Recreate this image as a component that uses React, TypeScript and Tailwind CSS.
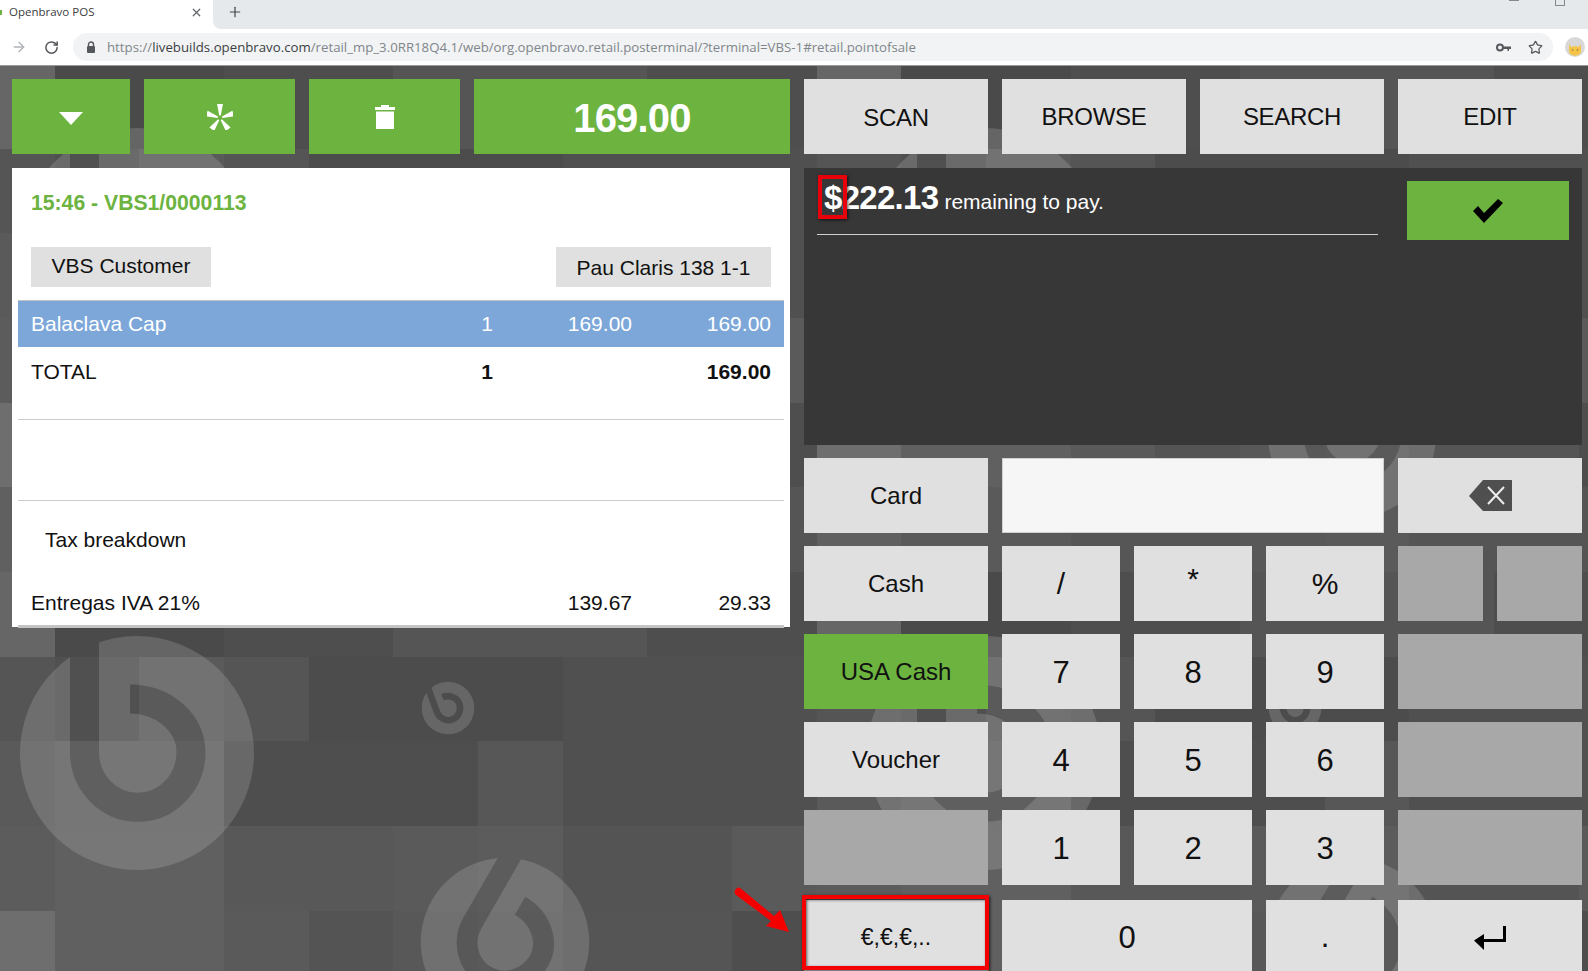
import { ArrowRight, Plus, RotateCw, Star, X } from 'lucide-react';

const TILE = 84.67;
const TILES = [
  ['#666666', '#4a4a4a', '#4a4a4a', '#4e4e4e', '#4e4e4e', '#555555', '#555555', '#555555', '#4e4e4e', '#4e4e4e'],
  ['#555555', '#505050', '#5a5a5a', '#555555', '#4c4c4c', '#4c4c4c', '#4c4c4c', '#505050', '#505050', '#505050'],
  ['#5a5a5a', '#5f5f5f', '#5f5f5f', '#4e4e4e', '#4e4e4e', '#4e4e4e', '#575757', '#505050', '#505050', '#505050'],
  ['#5c5c5c', '#606060', '#606060', '#585858', '#585858', '#5a5a5a', '#5c5c5c', '#545454', '#545454', '#5a5a5a'],
  ['#6e6e6e', '#606060', '#606060', '#5a5a5a', '#545454', '#585858', '#5a5a5a', '#555555', '#555555', '#4e4e4e'],
  ['#606060', '#5a5a5a', '#5a5a5a', '#565656', '#565656', '#585858', '#5a5a5a', '#555555', '#555555', '#555555'],
];

const LOGOS = [
  { x: 137, y: 245, s: 1, r: 0 },
  { x: 984, y: 245, s: 1, r: 0 },
  { x: 137, y: 753, s: 1, r: 0 },
  { x: 984, y: 753, s: 1, r: 0 },
  { x: 448, y: 708, s: 0.225, r: -20 },
  { x: 1295, y: 708, s: 0.225, r: -20 },
  { x: 505, y: 942, s: 0.72, r: 30 },
  { x: 1352, y: 942, s: 0.72, r: 30 },
  { x: 1352, y: 434, s: 0.72, r: 30 },
];

function Background() {
  const cells = [];
  for (let row = 0; row < 11; row++) {
    for (let col = 0; col < 20; col++) {
      cells.push(
        <rect
          key={row + '-' + col}
          x={-30 + col * TILE}
          y={64 + row * TILE}
          width={TILE + 1}
          height={TILE + 1}
          fill={TILES[row % 6][col % 10]}
          shapeRendering="crispEdges"
        />
      );
    }
  }
  return (
    <svg className="absolute left-0 top-0" width="1588" height="971" viewBox="0 0 1588 971">
      <defs>
        <mask id="logoCut" maskUnits="userSpaceOnUse" x="-130" y="-130" width="260" height="260">
          <rect x="-130" y="-130" width="260" height="260" fill="white" />
          <path d="M-52.5 -130V-1A53 55 0 0 0 54 -1A61 53 0 0 0 -7 -54" fill="none" stroke="black" strokeWidth="29" />
        </mask>
      </defs>
      {cells}
      {LOGOS.map((l, i) => (
        <g key={i} transform={`translate(${l.x} ${l.y}) rotate(${l.r}) scale(${l.s})`}>
          <g mask="url(#logoCut)">
            <circle r="117" fill="white" fillOpacity="0.15" />
          </g>
        </g>
      ))}
    </svg>
  );
}

function BrowserChrome() {
  return (
    <div className="relative bg-white h-[66px] border-b border-[#9a9a9a] font-['Open_Sans',sans-serif]">
      <div className="flex h-[29px]">
        <div className="w-[213px] flex items-center pl-[9px] pr-[10px] text-[11.5px] text-[#3c4043] relative">
          <span className="absolute left-0 top-[10px] w-[2px] h-[5px] bg-[#6db33f]" />
          <span className="flex-1 pb-[5px]">Openbravo POS</span>
          <X className="w-[13px] h-[13px] mb-[5px] text-[#5f6368]" strokeWidth={2.2} />
        </div>
        <div className="flex-1 flex bg-[#e6e9ec] rounded-bl-[8px]">
          <Plus className="ml-[14px] mt-[4px] w-[16px] h-[16px] text-[#444]" strokeWidth={1.8} />
          <div className="flex-1" />
          <div className="w-[10px] h-[1px] bg-[#888] mr-[36px]" />
          <div className="w-[10px] h-[6px] border border-t-0 border-[#888] mr-[23px]" />
        </div>
      </div>
      <div className="flex items-center h-[28px] mt-[4px]">
        <ArrowRight className="ml-[11px] w-[16px] h-[16px] text-[#b0b3b7]" strokeWidth={2} />
        <RotateCw className="ml-[17px] w-[15px] h-[15px] text-[#55585c]" strokeWidth={2.4} />
        <div className="ml-[14px] w-[1480px] h-[28px] rounded-full bg-[#f1f3f4] flex items-center text-[13.24px]">
          <svg className="ml-[13px]" width="10" height="13" viewBox="0 0 10 13">
            <path d="M2.5 5V3.5a2.5 2.5 0 0 1 5 0V5" fill="none" stroke="#55585c" strokeWidth="1.4" />
            <rect x="1" y="5" width="8" height="7" rx="1" fill="#55585c" />
          </svg>
          <span className="ml-[11px] whitespace-nowrap text-[#80868b] pt-[1px]">
            https://<span className="text-[#3c4043]">livebuilds.openbravo.com</span>/retail_mp_3.0RR18Q4.1/web/org.openbravo.retail.posterminal/?terminal=VBS-1#retail.pointofsale
          </span>
          <div className="flex-1" />
          <svg width="15" height="9" viewBox="0 0 15 9" className="mr-[17px]">
            <circle cx="4" cy="4.5" r="3" fill="none" stroke="#55585c" strokeWidth="2" />
            <path d="M7 3.5H15V6H13V8H11.5V6H7z" fill="#55585c" />
          </svg>
          <Star className="mr-[10px] w-[15px] h-[15px] text-[#55585c]" strokeWidth={2} />
        </div>
        <svg className="ml-[12px]" width="20" height="20" viewBox="0 0 20 20">
          <circle cx="10" cy="10" r="10" fill="#d8d8d8" />
          <path d="M4 7L6 10C7 9 13 9 14 10L16 7V15C14 20 6 20 4 15Z" fill="#f5c54a" />
          <circle cx="7.5" cy="13" r="0.8" fill="#8a6a20" />
          <circle cx="12.5" cy="13" r="0.8" fill="#8a6a20" />
        </svg>
      </div>
    </div>
  );
}

function TopIconButton({ className, children }: { className: string; children: React.ReactNode }) {
  return <div className={`h-[75px] bg-[#6cb33f] flex items-center justify-center ${className}`}>{children}</div>;
}

function ReceiptRow({ name, qty, price, total, className }: { name: string; qty?: string; price?: string; total?: string; className?: string }) {
  return (
    <div className={`grid grid-cols-[436px_40px_125px_139px] px-[13px] items-center ${className ?? ''}`}>
      <span>{name}</span>
      <span className="text-center">{qty}</span>
      <span className="text-right">{price}</span>
      <span className="text-right">{total}</span>
    </div>
  );
}

function LeftColumn() {
  return (
    <div className="w-[778px]">
      <div className="flex gap-[14px]">
        <TopIconButton className="w-[118px] pt-[3px]">
          <svg width="24" height="13" viewBox="0 0 24 13">
            <path d="M0 0H24L12 13Z" fill="white" />
          </svg>
        </TopIconButton>
        <TopIconButton className="w-[151px]">
          <svg width="26" height="26" viewBox="-14 -15 28 28" fill="white">
            <path d="M-0.8 -2.500H0.8L3.2 -15H-3.2Z" />
            <path d="M-0.8 -2.500H0.8L3.2 -15H-3.2Z" transform="rotate(72)" />
            <path d="M-0.8 -2.500H0.8L3.2 -15H-3.2Z" transform="rotate(144)" />
            <path d="M-0.8 -2.500H0.8L3.2 -15H-3.2Z" transform="rotate(216)" />
            <path d="M-0.8 -2.500H0.8L3.2 -15H-3.2Z" transform="rotate(288)" />
          </svg>
        </TopIconButton>
        <TopIconButton className="w-[151px]">
          <svg width="20" height="24" viewBox="0 0 20 24" fill="white">
            <path d="M0 2H6V0H14V2H20V5H0Z" />
            <path d="M1 6.5H19V24H1Z" />
          </svg>
        </TopIconButton>
        <TopIconButton className="flex-1 text-white font-bold text-[40px] tracking-[-0.8px] pt-[2px]">169.00</TopIconButton>
      </div>
      <div className="mt-[14px] h-[459px] bg-white px-[6px] text-[21px] text-[#111]">
        <div className="pt-[21px] pl-[13px] text-[21.2px] leading-[28px] font-bold text-[#6cb33f]">15:46 - VBS1/0000113</div>
        <div className="flex justify-between pl-[13px] pr-[13px] mt-[30px]">
          <div className="w-[180px] h-[40px] bg-[#e0e0e0] flex items-center justify-center pb-[3px]">VBS Customer</div>
          <div className="w-[215px] h-[40px] bg-[#e0e0e0] flex items-center justify-center pt-[1px]">Pau Claris 138 1-1</div>
        </div>
        <ReceiptRow
          name="Balaclava Cap"
          qty="1"
          price="169.00"
          total="169.00"
          className="mt-[13px] h-[47px] bg-[#7da7d9] border-t border-[#c4c4c4] text-white"
        />
        <div className="h-[73px] border-b border-[#cccccc]">
          <ReceiptRow name="TOTAL" qty="1" total="169.00" className="h-[49px] [&>*:nth-child(n+2)]:font-bold" />
        </div>
        <div className="h-[81px] border-b border-[#cccccc]" />
        <div className="pl-[27px] pt-[25px] leading-[28px]">Tax breakdown</div>
        <ReceiptRow name="Entregas IVA 21%" price="139.67" total="29.33" className="mt-[33px] h-[28px]" />
        <div className="h-[3px] mt-[10px] bg-[#c4c4c4]" />
      </div>
    </div>
  );
}

function Key({ children, className, tone = 'bg-[#e0e0e0]' }: { children?: React.ReactNode; className?: string; tone?: string }) {
  return <div className={`h-[75px] flex items-center justify-center text-[#111] ${tone} ${className ?? ''}`}>{children}</div>;
}

function Digit({ children, className }: { children: string; className?: string }) {
  return (
    <Key className={`text-[31px] pt-[4px] ${className ?? ''}`}>{children}</Key>
  );
}

function RightColumn() {
  const disabled = 'bg-[#a8a8a8]';
  return (
    <div className="w-[778px] relative">
      <div className="grid grid-cols-4 gap-[14px] text-[24px] tracking-[-0.3px]">
        <Key><span className="pt-[2px]">SCAN</span></Key>
        <Key>BROWSE</Key>
        <Key>SEARCH</Key>
        <Key>EDIT</Key>
      </div>

      <div className="mt-[14px] h-[277px] bg-[#373737] flex justify-between text-white">
        <div className="ml-[13px] w-[561px] h-[67px] border-b border-[#cfcfcf] pl-[7px] pt-[10px] whitespace-nowrap">
          <span className="font-bold text-[33px] leading-[40px] tracking-[-0.7px]">$222.13</span>
          <span className="ml-[6px] text-[21px]">remaining to pay.</span>
        </div>
        <div className="mt-[13px] mr-[13px] w-[162px] h-[59px] bg-[#6cb33f] flex items-center justify-center">
          <svg width="30" height="24" viewBox="0 0 30 24">
            <path d="M0 12L5 7L11 14L25 0L30 4L11 24Z" fill="black" />
          </svg>
        </div>
      </div>

      <div className="mt-[13px] grid grid-cols-[184px_118px_118px_118px_85px_85px] gap-x-[14px] gap-y-[13px] text-[24px]">
        <Key>Card</Key>
        <div className="col-span-3 h-[75px] bg-[#f6f6f6] border border-[#d0d0d0]" />
        <Key className="col-span-2">
          <svg width="43" height="31" viewBox="0 0 43 31">
            <path d="M14 0H43V31H14L0 16Z" fill="#4f4f4f" />
            <path d="M19 7L35 24M35 7L19 24" stroke="#eeeeee" strokeWidth="2" fill="none" />
          </svg>
        </Key>

        <Key>Cash</Key>
        <Key className="text-[30px]">/</Key>
        <Key className="text-[30px]"><span className="pb-[10px]">*</span></Key>
        <Key className="text-[30px]">%</Key>
        <Key tone={disabled} />
        <Key tone={disabled} />

        <Key tone="bg-[#6cb33f]">USA Cash</Key>
        <Digit>7</Digit>
        <Digit>8</Digit>
        <Digit>9</Digit>
        <Key tone={disabled} className="col-span-2" />

        <Key>Voucher</Key>
        <Digit>4</Digit>
        <Digit>5</Digit>
        <Digit>6</Digit>
        <Key tone={disabled} className="col-span-2" />

        <Key tone={disabled} />
        <Digit>1</Digit>
        <Digit>2</Digit>
        <Digit>3</Digit>
        <Key tone={disabled} className="col-span-2" />

        <Key className="mt-[2px] text-[23px]"><span className="pb-[1px]">€,€,€,..</span></Key>
        <Key className="mt-[2px] col-span-2 text-[31px] pt-[2px]">0</Key>
        <Key className="mt-[2px] text-[31px]">.</Key>
        <Key className="mt-[2px] col-span-2">
          <svg width="32" height="24" viewBox="0 0 32 24">
            <path d="M29 0H32V16H10V24L0 14.5L10 8V13H29Z" fill="black" />
          </svg>
        </Key>
      </div>

      {/* annotations drawn on the screenshot */}
      <div className="absolute left-[14px] top-[96px] w-[29px] h-[44px] border-[4px] border-[#e8000b] shadow-[1px_1px_3px_rgba(0,0,0,0.7)]" />
      <div className="absolute left-[-2px] top-[816px] w-[187px] h-[75px] border-[4px] border-[#f40000] shadow-[1px_1px_3px_rgba(0,0,0,0.7),inset_1px_1px_3px_rgba(0,0,0,0.6)]" />
      <svg className="absolute left-[-71px] top-[808px]" width="60" height="50" viewBox="0 0 60 50">
        <path d="M4 1C6 0 7 1 9 2.500L41 29L47 23L56 45L33 39L38 34L3 8C1 6 1 3 4 1Z" fill="#f40000" />
      </svg>
    </div>
  );
}

export default function App() {
  return (
    <div className="relative w-[1588px] h-[971px] overflow-hidden font-['Liberation_Sans',Arial,sans-serif]">
      <BrowserChrome />
      <div className="relative h-[905px] overflow-hidden">
        <div className="absolute left-0 top-[-66px]">
          <Background />
        </div>
        <div className="relative flex gap-[14px] pl-[12px] pt-[13px]">
          <LeftColumn />
          <RightColumn />
        </div>
      </div>
    </div>
  );
}
